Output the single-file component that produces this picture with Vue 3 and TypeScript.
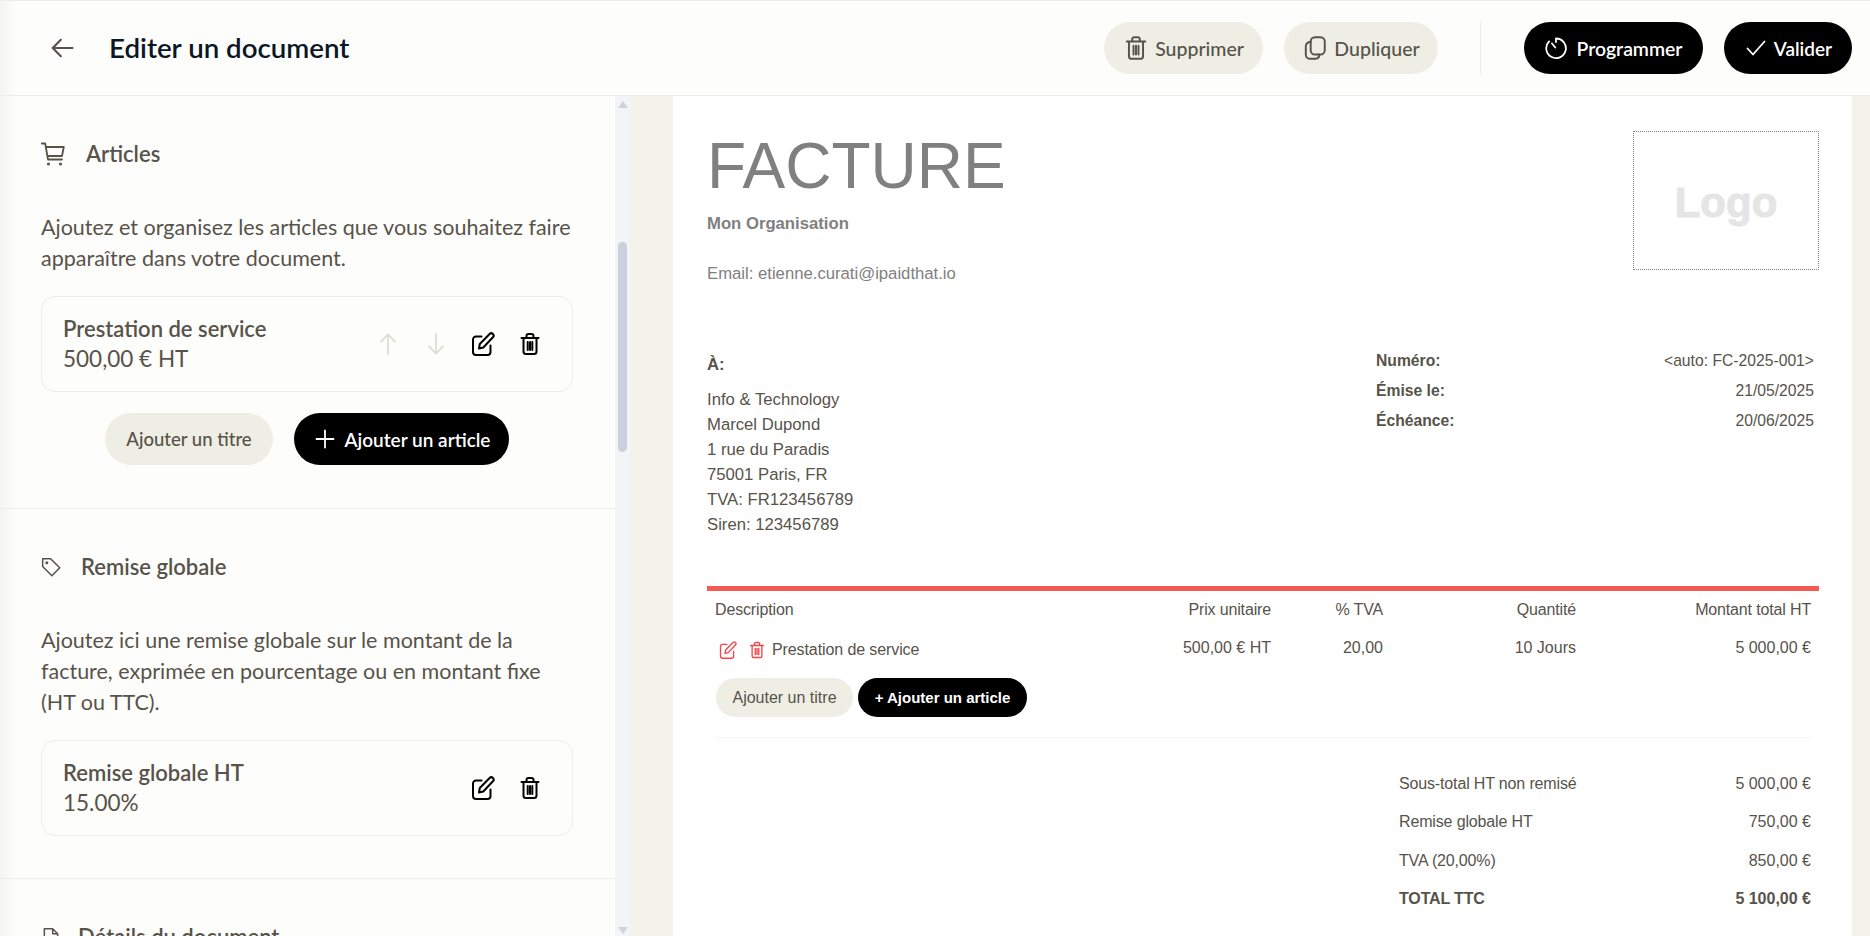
<template>
  <div class="page">
    <!-- shared icons -->
    <svg class="icon-defs" aria-hidden="true">
      <symbol id="i-trash" viewBox="0 0 24 24">
        <path d="M3.500 6h17M8.500 5.500V4A2 2 0 0 1 10.500 2h3a2 2 0 0 1 2 2v1.500M5.500 6v13.500a2.500 2.500 0 0 0 2.500 2.500h8a2.500 2.500 0 0 0 2.500-2.500V6M9.700 10v8M12 10v8M14.300 10v8" />
      </symbol>
      <symbol id="i-edit" viewBox="0 0 24 24">
        <path d="M10.500 4.500H5a3 3 0 0 0-3 3V20a3 3 0 0 0 3 3h11.500a3 3 0 0 0 3-3v-6.500" />
        <path d="M8 16.500l.8-4.500L18.600 2a2.300 2.300 0 0 1 3.300 3.300L12.300 15.500z" />
      </symbol>
    </svg>

    <header class="topbar">
      <div class="topbar-left">
        <button class="back-btn" aria-label="Retour">
          <svg class="icon" viewBox="0 0 24 24" width="28" height="28"><path d="M21 12H4M11 5l-7 7 7 7" /></svg>
        </button>
        <h1 class="page-title">Editer un document</h1>
      </div>
      <div class="topbar-actions">
        <button class="btn btn-soft btn-supprimer">
          <svg class="icon" width="26" height="26"><use href="#i-trash" /></svg>
          Supprimer
        </button>
        <button class="btn btn-soft btn-dupliquer">
          <svg class="icon" viewBox="0 0 24 24" width="26" height="26">
            <rect x="8" y="2" width="13" height="16" rx="4" />
            <path d="M8 6.500A4 4 0 0 0 3.500 10.500V18a4 4 0 0 0 4 4h5a4 4 0 0 0 3.500-4" />
          </svg>
          Dupliquer
        </button>
        <span class="topbar-sep"></span>
        <button class="btn btn-dark btn-programmer">
          <svg class="icon" viewBox="0 0 24 24" width="24" height="24">
            <path d="M12 2.500a9.800 9.800 0 1 1-6.900 2.900M12 2.500v3.500M8 7.500l3.300 4" />
          </svg>
          Programmer
        </button>
        <button class="btn btn-dark btn-valider">
          <svg class="icon" viewBox="0 0 24 24" width="24" height="24"><path d="M3.500 12.500l5.500 6L20.500 5.500" /></svg>
          Valider
        </button>
      </div>
    </header>

    <div class="workspace">
      <aside class="sidebar">
        <div class="sidebar-content">
          <section class="panel">
            <h2 class="panel-title gap-articles">
              <svg class="icon" viewBox="0 0 24 24" width="24" height="24">
                <path d="M.800 1.500h3.400l2.800 16h14M4.800 5h18l-1.800 9H6.300" />
                <circle cx="7.500" cy="22" r=".7" /><circle cx="19.500" cy="22" r=".7" />
              </svg>
              Articles
            </h2>
            <p class="panel-desc">Ajoutez et organisez les articles que vous souhaitez faire apparaître dans votre document.</p>
            <div class="item-card">
              <div class="item-text">
                <strong>Prestation de service</strong>
                <span>500,00 € HT</span>
              </div>
              <div class="item-actions">
                <svg class="icon faded" viewBox="0 0 24 24" width="24" height="24"><path d="M12 22V2.500M5 9.500l7-7 7 7" /></svg>
                <svg class="icon faded" viewBox="0 0 24 24" width="24" height="24"><path d="M12 2v19.500M5 14.500l7 7 7-7" /></svg>
                <svg class="icon strong" width="24" height="24"><use href="#i-edit" /></svg>
                <svg class="icon strong" width="24" height="24"><use href="#i-trash" /></svg>
              </div>
            </div>
            <div class="panel-buttons">
              <button class="btn btn-soft btn-titre">Ajouter un titre</button>
              <button class="btn btn-dark btn-article">
                <svg class="icon" viewBox="0 0 24 24" width="24" height="24"><path d="M12 3.500v17M3.500 12h17" /></svg>
                Ajouter un article
              </button>
            </div>
          </section>

          <section class="panel">
            <h2 class="panel-title gap-remise">
              <svg class="icon" viewBox="0 0 24 24" width="20" height="20">
                <path d="M2 2h9.500L22.500 13 13 22.500 2 11.500z" />
                <circle cx="7" cy="7" r=".9" />
              </svg>
              Remise globale
            </h2>
            <p class="panel-desc">Ajoutez ici une remise globale sur le montant de la facture, exprimée en pourcentage ou en montant fixe (HT ou TTC).</p>
            <div class="item-card">
              <div class="item-text">
                <strong>Remise globale HT</strong>
                <span>15.00%</span>
              </div>
              <div class="item-actions">
                <svg class="icon strong" width="24" height="24"><use href="#i-edit" /></svg>
                <svg class="icon strong" width="24" height="24"><use href="#i-trash" /></svg>
              </div>
            </div>
          </section>

          <section class="panel">
            <h2 class="panel-title gap-details">
              <svg class="icon" viewBox="0 0 24 24" width="20" height="20">
                <path d="M4 2h10l6 6v14H4zM14 2v6h6" />
              </svg>
              Détails du document
            </h2>
          </section>
        </div>
        <div class="scrollbar">
          <span class="scroll-arrow up"></span>
          <span class="scroll-thumb"></span>
          <span class="scroll-arrow down"></span>
        </div>
      </aside>

      <main class="preview">
        <article class="paper">
          <div class="paper-head">
            <div>
              <div class="doc-title">FACTURE</div>
              <div class="org-name">Mon Organisation</div>
              <div class="org-email">Email: etienne.curati@ipaidthat.io</div>
            </div>
            <div class="logo-box">Logo</div>
          </div>

          <div class="parties">
            <div class="recipient">
              <div class="recipient-label">À:</div>
              <div v-for="line in recipient" :key="line">{{ line }}</div>
            </div>
            <dl class="doc-meta">
              <template v-for="row in meta" :key="row.label">
                <dt>{{ row.label }}</dt>
                <dd>{{ row.value }}</dd>
              </template>
            </dl>
          </div>

          <div class="lines">
            <div class="lines-row lines-head">
              <div class="cell-desc">Description</div>
              <div>Prix unitaire</div>
              <div>% TVA</div>
              <div>Quantité</div>
              <div>Montant total HT</div>
            </div>
            <div class="lines-row lines-item">
              <div class="cell-desc cell-item">
                <svg class="icon red" width="18" height="18"><use href="#i-edit" /></svg>
                <svg class="icon red" width="18" height="18"><use href="#i-trash" /></svg>
                <span>Prestation de service</span>
              </div>
              <div>500,00 € HT</div>
              <div>20,00</div>
              <div>10 Jours</div>
              <div>5 000,00 €</div>
            </div>
            <div class="lines-buttons">
              <button class="btn btn-soft btn-small btn-small-titre">Ajouter un titre</button>
              <button class="btn btn-dark btn-small btn-small-article">+ Ajouter un article</button>
            </div>
          </div>

          <div class="totals">
            <div v-for="row in totals" :key="row.label" class="totals-row" :class="{ grand: row.grand }">
              <span class="totals-label">{{ row.label }}</span>
              <span>{{ row.value }}</span>
            </div>
          </div>
        </article>
      </main>
    </div>
  </div>
</template>

<script setup lang="ts">
  const recipient: string[] = [
    'Info & Technology',
    'Marcel Dupond',
    '1 rue du Paradis',
    '75001 Paris, FR',
    'TVA: FR123456789',
    'Siren: 123456789',
  ];

  const meta = [
    { label: 'Numéro:', value: '<auto: FC-2025-001>' },
    { label: 'Émise le:', value: '21/05/2025' },
    { label: 'Échéance:', value: '20/06/2025' },
  ];

  const totals = [
    { label: 'Sous-total HT non remisé', value: '5 000,00 €', grand: false },
    { label: 'Remise globale HT', value: '750,00 €', grand: false },
    { label: 'TVA (20,00%)', value: '850,00 €', grand: false },
    { label: 'TOTAL TTC', value: '5 100,00 €', grand: true },
  ];
</script>

<style>
  html,
  body {
    margin: 0;
    height: 100%;
    overflow: hidden;
  }
</style>

<style scoped>
  .page {
    height: 936px;
    overflow: hidden;
    display: flex;
    flex-direction: column;
    background: #fdfdfb;
    color: #57534a;
    font-family: Lato, 'Noto Sans', sans-serif;
  }

  .icon-defs {
    position: absolute;
    width: 0;
    height: 0;
  }

  .icon {
    fill: none;
    stroke: currentColor;
    stroke-width: 1.8;
    stroke-linecap: round;
    stroke-linejoin: round;
    flex: none;
  }

  /* Top bar */
  .topbar {
    height: 96px;
    box-sizing: border-box;
    flex: none;
    display: flex;
    align-items: center;
    justify-content: space-between;
    padding: 0 18px 0 48px;
    border-top: 1px solid #eeeee4;
    border-bottom: 1px solid #eeeee4;
    background: linear-gradient(90deg, #f5f5f2, #fdfdfb 16px);
  }

  .topbar-left {
    display: flex;
    align-items: center;
    gap: 33px;
  }

  .back-btn {
    padding: 0;
    border: 0;
    background: none;
    color: #57534a;
    display: flex;
  }

  .page-title {
    margin: 0 0 2px;
    font-size: 27.700px;
    font-weight: 600;
    color: #0b1626;
  }

  .topbar-actions {
    display: flex;
    align-items: center;
    gap: 21px;
  }

  .topbar-sep {
    width: 1px;
    height: 52px;
    margin: 0 22px 0 21px;
    background: #eeeee4;
  }

  .btn {
    height: 52px;
    box-sizing: border-box;
    display: inline-flex;
    align-items: center;
    justify-content: center;
    gap: 6px;
    padding: 0;
    border: 0;
    border-radius: 26px;
    font-family: inherit;
    font-size: 19.500px;
    font-weight: 500;
  }

  .btn-soft {
    background: #eeeee4;
    color: #57534a;
  }

  .btn-dark {
    background: #000;
    color: #fff;
    font-size: 19px;
    font-weight: 600;
  }

  .btn-supprimer { width: 159px; }
  .btn-dupliquer { width: 154px; }
  .btn-programmer { width: 179px; gap: 8px; font-size: 19.400px; }
  .btn-valider { width: 128px; }
  .btn-titre { width: 168px; font-size: 18.500px; }
  .btn-article { width: 215px; gap: 8px; }

  /* Sidebar */
  .workspace {
    flex: 1;
    min-height: 0;
    display: flex;
  }

  .sidebar {
    width: 630px;
    flex: none;
    display: flex;
    background: linear-gradient(90deg, #f5f5f2, #fdfdfb 16px);
  }

  .sidebar-content {
    flex: 1;
    min-width: 0;
    overflow: hidden;
  }

  .panel {
    padding: 42px 42px 43px 41px;
    border-bottom: 1px solid #eeeee4;
  }

  .panel + .panel {
    padding-bottom: 42px;
  }

  .panel-title {
    margin: 0 0 43px;
    display: flex;
    align-items: center;
    font-size: 22px;
    line-height: 31px;
    font-weight: 600;
  }

  .gap-articles { gap: 21px; }
  .gap-remise { gap: 20px; }
  .gap-details { gap: 17px; }

  .panel-desc {
    margin: 0 0 22px;
    font-size: 21.500px;
    line-height: 31px;
  }

  .item-card {
    display: flex;
    align-items: center;
    justify-content: space-between;
    padding: 16px 30.500px 16px 21px;
    border: 1px solid #eeeee4;
    border-radius: 14px;
  }

  .item-text {
    display: flex;
    flex-direction: column;
    font-size: 22.500px;
    line-height: 31px;
  }

  .item-text strong {
    font-size: 22px;
    font-weight: 600;
  }

  .item-text span {
    margin: -1px 0 1px;
  }

  .item-actions {
    display: flex;
    gap: 23px;
  }

  .faded {
    color: #deded3;
  }

  .faded + .faded {
    margin-left: 1px;
  }

  .strong {
    color: #000;
    stroke-width: 2;
  }

  .panel-buttons {
    display: flex;
    justify-content: center;
    gap: 21px;
    margin-top: 21px;
  }

  .scrollbar {
    width: 15px;
    flex: none;
    display: flex;
    flex-direction: column;
    align-items: center;
    background: #f2f4f7;
  }

  .scroll-arrow {
    width: 0;
    height: 0;
    border-left: 5px solid transparent;
    border-right: 5px solid transparent;
  }

  .scroll-arrow.up {
    margin-top: 5px;
    border-bottom: 7px solid #ced3de;
  }

  .scroll-arrow.down {
    margin-top: auto;
    margin-bottom: 2px;
    border-top: 7px solid #ced3de;
  }

  .scroll-thumb {
    width: 9px;
    height: 210px;
    margin-top: 134px;
    border-radius: 5px;
    background: #cbd0dc;
  }

  /* Invoice preview */
  .preview {
    flex: 1;
    min-width: 0;
    padding: 0 18px 0 43px;
    background: #f3f3ec;
  }

  .paper {
    height: 100%;
    box-sizing: border-box;
    padding: 35px 33px 0 34px;
    background: #fff;
    font-family: 'Liberation Sans', Arial, sans-serif;
    font-size: 16px;
  }

  .paper-head {
    display: flex;
    justify-content: space-between;
    align-items: flex-start;
  }

  .doc-title {
    font-size: 64px;
    line-height: 70px;
    color: #808080;
  }

  .org-name {
    margin-top: 11px;
    font-size: 16.700px;
    font-weight: 700;
    color: #808080;
    line-height: 24px;
  }

  .org-email {
    margin-top: 26px;
    font-size: 16.700px;
    color: #808080;
    line-height: 24px;
  }

  .logo-box {
    width: 186px;
    height: 139px;
    box-sizing: border-box;
    padding-top: 5px;
    display: flex;
    align-items: center;
    justify-content: center;
    border: 1px dotted #808080;
    font-size: 42px;
    font-weight: 700;
    color: #e5e5e5;
    -webkit-text-stroke: 1px #e5e5e5;
  }

  .parties {
    margin-top: 66px;
    display: flex;
    justify-content: space-between;
    align-items: flex-start;
  }

  .recipient {
    font-size: 16.700px;
    line-height: 25px;
  }

  .recipient-label {
    margin-bottom: 10px;
    font-weight: 700;
  }

  .doc-meta {
    width: 438px;
    margin: -6px 5px 0 0;
    font-size: 15.700px;
    display: grid;
    grid-template-columns: 1fr auto;
    grid-auto-rows: 30px;
    align-items: center;
  }

  .doc-meta dt {
    font-weight: 700;
  }

  .doc-meta dd {
    margin: 0;
    text-align: right;
  }

  .lines {
    margin-top: 49px;
    border-top: 5px solid #f55a54;
  }

  .lines-row {
    display: grid;
    grid-template-columns: 412px 160px 112px 193px 235px;
    text-align: right;
  }

  .lines-row > div {
    padding: 0 8px;
  }

  .lines-head {
    padding-top: 7px;
    line-height: 24px;
    letter-spacing: -0.15px;
  }

  .cell-desc {
    text-align: left;
  }

  .lines-item {
    margin-top: 14px;
    line-height: 24px;
  }

  .cell-item {
    display: flex;
    align-items: center;
    gap: 11px;
    padding-top: 2px !important;
    margin-left: 4px;
    letter-spacing: -0.1px;
  }

  .cell-item span {
    margin-left: -5px;
  }

  .red {
    color: #f4454a;
  }

  .lines-buttons {
    display: flex;
    gap: 5px;
    margin: 16px 8px 0 9px;
    padding-bottom: 20px;
    border-bottom: 1px solid #f5f5f5;
  }

  .btn-small {
    height: 39px;
    font-size: 16px;
  }

  .btn-small.btn-dark {
    font-size: 15px;
  }

  .btn-small-titre { width: 137px; }
  .btn-small-article { width: 169px; }

  .totals {
    width: 412px;
    margin: 27px 8px 0 auto;
  }

  .totals-row {
    height: 38.300px;
    display: flex;
    justify-content: space-between;
    align-items: center;
  }

  .totals-label {
    letter-spacing: -0.15px;
  }

  .totals-row.grand {
    font-weight: 700;
  }
</style>
